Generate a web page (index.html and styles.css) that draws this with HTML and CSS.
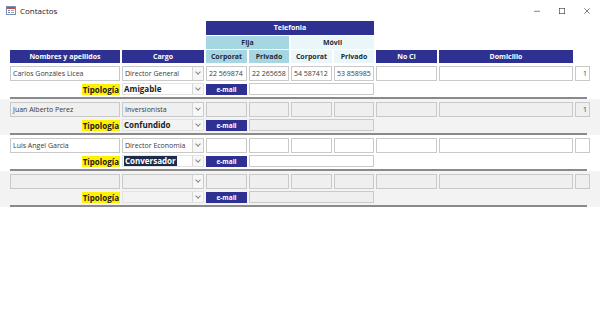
FILE: index.html
```html
<!DOCTYPE html>
<html lang="es">
<head>
    <title>Contactos</title>
    <link rel="stylesheet" href="styles.css">
</head>
<body>
    <div class="titlebar">
        <svg class="app-icon" width="10" height="9" viewBox="0 0 10 9">
            <rect x="0.5" y="0.5" width="9" height="8" fill="#fff" stroke="#7a8fb0"/>
            <rect x="1" y="1" width="8" height="2" fill="#c0504d"/>
            <rect x="2" y="4" width="2" height="1" fill="#5b7fb8"/>
            <rect x="5" y="4" width="3" height="1" fill="#9aaac4"/>
            <rect x="2" y="6" width="2" height="1" fill="#5b7fb8"/>
            <rect x="5" y="6" width="3" height="1" fill="#9aaac4"/>
        </svg>
        <span class="title">Contactos</span>
        <div class="controls">
            <svg width="10" height="10" viewBox="0 0 10 10"><line x1="0" y1="5.5" x2="10" y2="5.5" stroke="#333" stroke-width="1"/></svg>
            <svg width="10" height="10" viewBox="0 0 10 10"><rect x="0.5" y="0.5" width="9" height="9" fill="none" stroke="#333" stroke-width="1"/></svg>
            <svg width="10" height="10" viewBox="0 0 10 10"><path d="M0.5 0.5 L9.5 9.5 M9.5 0.5 L0.5 9.5" stroke="#333" stroke-width="1"/></svg>
        </div>
    </div>

    <div class="header grid">
        <div class="h-dark telefonia">Telefonia</div>
        <div class="h-fija fija">Fija</div>
        <div class="h-movil movil">Móvil</div>
        <div class="h-dark c1">Nombres y apellidos</div>
        <div class="h-dark c2">Cargo</div>
        <div class="h-fija c3">Corporat</div>
        <div class="h-fija c4">Privado</div>
        <div class="h-movil c5">Corporat</div>
        <div class="h-movil c6">Privado</div>
        <div class="h-dark c7">No CI</div>
        <div class="h-dark c8">Domicilio</div>
    </div>

    <div class="record">
        <div class="grid rec-grid">
            <div class="box">Carlos Gonzáles Licea</div>
            <div class="combo"><span class="val">Director General</span><span class="arrow"></span></div>
            <div class="box">22 569874</div>
            <div class="box">22 265658</div>
            <div class="box">54 587412</div>
            <div class="box">53 858985</div>
            <div class="box"></div>
            <div class="box"></div>
            <div class="box num">1</div>
            <div class="label"><span>Tipología</span></div>
            <div class="combo strong"><span class="val">Amigable</span><span class="arrow"></span></div>
            <div class="btn">e-mail</div>
            <div class="box wide"></div>
        </div>
    </div>

    <div class="record alt">
        <div class="grid rec-grid">
            <div class="box">Juan Alberto Perez</div>
            <div class="combo"><span class="val">Inversionista</span><span class="arrow"></span></div>
            <div class="box"></div>
            <div class="box"></div>
            <div class="box"></div>
            <div class="box"></div>
            <div class="box"></div>
            <div class="box"></div>
            <div class="box num">1</div>
            <div class="label"><span>Tipología</span></div>
            <div class="combo strong"><span class="val">Confundido</span><span class="arrow"></span></div>
            <div class="btn">e-mail</div>
            <div class="box wide"></div>
        </div>
    </div>

    <div class="record">
        <div class="grid rec-grid">
            <div class="box">Luis Angel Garcia</div>
            <div class="combo"><span class="val">Director Economia</span><span class="arrow"></span></div>
            <div class="box"></div>
            <div class="box"></div>
            <div class="box"></div>
            <div class="box"></div>
            <div class="box"></div>
            <div class="box"></div>
            <div class="box num"></div>
            <div class="label"><span>Tipología</span></div>
            <div class="combo strong"><span class="val"><span class="sel">Conversador</span></span><span class="arrow"></span></div>
            <div class="btn">e-mail</div>
            <div class="box wide"></div>
        </div>
    </div>

    <div class="record alt">
        <div class="grid rec-grid">
            <div class="box"></div>
            <div class="combo"><span class="val"></span><span class="arrow"></span></div>
            <div class="box"></div>
            <div class="box"></div>
            <div class="box"></div>
            <div class="box"></div>
            <div class="box"></div>
            <div class="box"></div>
            <div class="box num"></div>
            <div class="label"><span>Tipología</span></div>
            <div class="combo strong"><span class="val"></span><span class="arrow"></span></div>
            <div class="btn">e-mail</div>
            <div class="box wide"></div>
        </div>
    </div>
</body>
</html>
```

FILE: styles.css
```css
* {
    margin: 0;
    padding: 0;
    box-sizing: border-box;
    font-family: 'Open Sans', 'Noto Sans', sans-serif;
}

body {
    width: 600px;
    height: 317px;
    background: white;
    overflow: hidden;
}

.titlebar {
    height: 21px;
    display: flex;
    align-items: center;
    padding-left: 6px;
}

.app-icon {
    margin-right: 4px;
}

.title {
    font-size: 8px;
    color: #222;
}

.controls {
    margin-left: auto;
    display: flex;
    gap: 19px;
    padding-right: 10px;
}

.controls svg {
    width: 6px;
    height: 6px;
}

.grid {
    display: grid;
    grid-template-columns: 110px 82px 41px 40px 41px 40px 61px 134px 15px;
    column-gap: 2px;
}

.header {
    margin-left: 10px;
    grid-template-rows: 14px 13px 13px;
    row-gap: 1px;
}

.header div {
    font-size: 7px;
    font-weight: 700;
    text-align: center;
    line-height: 13px;
}

.h-dark {
    background: #2e3192;
    color: white;
}

.h-fija {
    background: #a7d6e3;
    color: #1f2a3a;
}

.h-movil {
    background: #ebf6f9;
    color: #1f2a3a;
}

.telefonia { grid-column: 3 / 7; grid-row: 1; }
.fija { grid-column: 3 / 5; grid-row: 2; }
.movil { grid-column: 5 / 7; grid-row: 2; }
.c1 { grid-column: 1; grid-row: 3; }
.c2 { grid-column: 2; grid-row: 3; }
.c3 { grid-column: 3; grid-row: 3; }
.c4 { grid-column: 4; grid-row: 3; }
.c5 { grid-column: 5; grid-row: 3; }
.c6 { grid-column: 6; grid-row: 3; }
.c7 { grid-column: 7; grid-row: 3; }
.c8 { grid-column: 8; grid-row: 3; }

.record {
    background: white;
}

.record.alt {
    background: #f3f3f3;
}

.rec-grid {
    margin-left: 10px;
    width: 577px;
    padding: 3px 0 2px;
    grid-template-rows: 15px 12px;
    row-gap: 2px;
    border-bottom: 2px solid #8a8a8a;
}

.box {
    border: 1px solid #c9c9c9;
    background: white;
    font-size: 7px;
    color: #3a3a3a;
    line-height: 13px;
    padding: 0 2px;
    white-space: nowrap;
    overflow: hidden;
}

.alt .box {
    background: #efefef;
}

.box.num {
    text-align: right;
}

.box.wide {
    grid-column: 4 / 7;
}

.combo {
    display: flex;
    border: 1px solid #c9c9c9;
    background: white;
    font-size: 7px;
    color: #3a3a3a;
    line-height: 13px;
}

.alt .combo {
    background: #efefef;
}

.combo .val {
    flex: 1;
    padding: 0 2px;
    white-space: nowrap;
    overflow: hidden;
}

.combo .arrow {
    width: 11px;
    border-left: 1px solid #d6d6d6;
    background: #f7f7f7;
    position: relative;
}

.combo .arrow::after {
    content: "";
    position: absolute;
    left: 3px;
    top: 3px;
    width: 3px;
    height: 3px;
    border-right: 1px solid #888;
    border-bottom: 1px solid #888;
    transform: rotate(45deg);
}

.combo.strong {
    border-color: #e2e2e2;
    background: transparent;
    font-size: 8px;
    font-weight: 700;
    color: #222;
    line-height: 10px;
}

.combo.strong .val {
    padding-left: 1px;
}

.combo.strong .arrow::after {
    top: 2px;
}

.sel {
    background: #1c2a4b;
    color: white;
    padding: 0 1px;
}

.label {
    display: flex;
    justify-content: flex-end;
    align-items: center;
}

.label span {
    background: #fff200;
    font-size: 8px;
    font-weight: 700;
    color: #222;
    line-height: 11px;
    padding: 0 1px;
}

.btn {
    background: #2e3192;
    color: white;
    font-size: 6.5px;
    font-weight: 700;
    text-align: center;
    line-height: 11px;
    height: 11px;
    margin-top: 1px;
}
```
